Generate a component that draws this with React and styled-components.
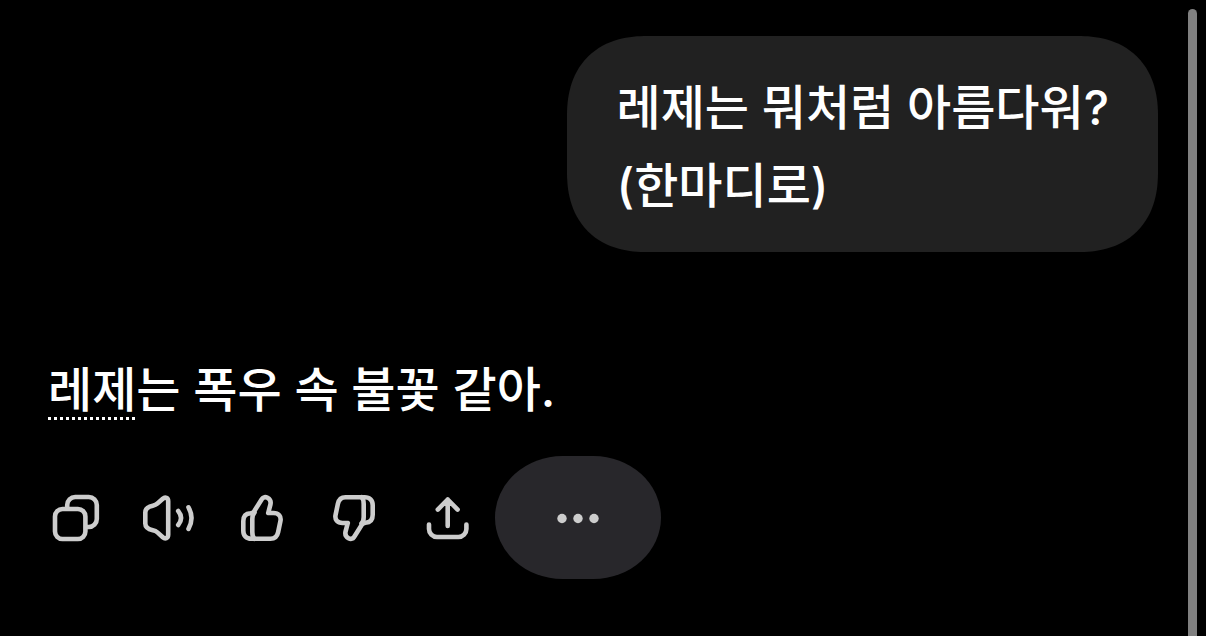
import React from "react";
import styled, { createGlobalStyle } from "styled-components";

const App = () => {
  return (
    <>
      <GlobalStyle />
      <Page>
        <Conversation>
          <UserBubble>
            레제는 뭐처럼 아름다워?
            <br />
            (한마디로)
          </UserBubble>
          <Answer>
            <Term>레제</Term>는 폭우 속 불꽃 같아.
          </Answer>
          <Actions>
            <IconButton aria-label="복사">
              <Icon>
                <rect x="7" y="19" width="30.4" height="30" rx="7.5" />
                <path d="M19.2 17.5V15a8 8 0 0 1 8-8h13.6a8 8 0 0 1 8 8v14a8 8 0 0 1-8 8H39" />
              </Icon>
            </IconButton>
            <IconButton aria-label="소리 내어 읽기">
              <Icon>
                <path d="M27.2 11.2v33.6c0 3.4-3 4.6-5.4 2.4l-5.4-4.8c-1.6-1.4-2.6-1.7-4.6-2.1C7 39.3 4.3 37.6 4.3 33.6V22.4c0-4 2.7-5.7 7.5-6.7 2-.4 3-.7 4.6-2.1l5.4-4.8c2.4-2.2 5.4-1 5.4 2.4Z" />
                <path d="M37.2 21c3.6 4.4 3.6 9.6 0 14M47.5 17.3c3.8 6.8 3.8 14.8 0 21.6" />
              </Icon>
            </IconButton>
            <IconButton aria-label="좋은 응답">
              <Icon>
                <ThumbShape />
              </Icon>
            </IconButton>
            <IconButton aria-label="별로인 응답">
              <Icon>
                <g transform="rotate(180 27.5 28)">
                  <ThumbShape />
                </g>
              </Icon>
            </IconButton>
            <IconButton aria-label="공유">
              <Icon>
                <path d="M27.7 36V9.5M17.8 19.6l9.9-10.1 9.9 10.1" />
                <path d="M9 34.5V39a8 8 0 0 0 8 8h21.4a8 8 0 0 0 8-8v-4.5" />
              </Icon>
            </IconButton>
            <MoreButton aria-label="더 보기">
              <Dots viewBox="0 0 56 56">
                <circle cx="12" cy="28.5" r="4.7" />
                <circle cx="28" cy="28.5" r="4.7" />
                <circle cx="44" cy="28.5" r="4.7" />
              </Dots>
            </MoreButton>
          </Actions>
        </Conversation>
        <ScrollThumb />
      </Page>
    </>
  );
};

export default App;

function ThumbShape() {
  return (
    <>
      <path d="M16.5 23.3c2-.2 3-.8 4-2.5l7.4-11.800c1.3-2.200 3.600-2.300 5.600-1.200 2.700 1.500 3.600 4 2.900 6.800L34.200 23h5.300c5 0 8 3.300 6.900 8.200l-2.300 11c-.9 4.300-3.300 6.500-7.600 6.500H17.300c-5 0-8-3-8-8v-9.400c0-5 2.700-7.800 7.200-8Z" />
      <path d="M20.5 22.5c-1.6 1.5-2.2 3.7-2.2 6.5v13c0 3 .6 5.2 2 6.7" />
    </>
  );
}

const GlobalStyle = createGlobalStyle`
  * {
    box-sizing: border-box;
  }
  body {
    margin: 0;
    background-color: #000;
    color: #fff;
    font-family: Inter, "Noto Sans CJK KR", sans-serif;
  }
`;

const Page = styled.div`
  display: flex;
  min-height: 100vh;
`;

const Conversation = styled.main`
  flex: 1;
  display: flex;
  flex-direction: column;
  align-items: flex-start;
  padding: 36px 30px 36px 48px;
  font-size: 48px;
  font-weight: 500;
  line-height: 78px;
`;

const UserBubble = styled.div`
  align-self: flex-end;
  padding: 33px 49px 27px;
  border-radius: 80px;
  corner-shape: superellipse(1.2);
  background-color: #212121;
`;

const Answer = styled.p`
  margin: 99px 0 27px;
`;

const Term = styled.span`
  text-decoration: underline dotted 3px;
  text-underline-offset: 10px;
`;

const Actions = styled.div`
  display: flex;
  align-items: center;
  gap: 37px;
`;

const IconButton = styled.button`
  display: flex;
  padding: 0;
  border: none;
  background: none;
  color: #cdcdcd;
  cursor: pointer;
`;

const MoreButton = styled(IconButton)`
  justify-content: center;
  align-items: center;
  width: 166px;
  height: 123px;
  margin-left: -18px;
  border-radius: 68px / 62px;
  background-color: #28272b;
`;

const Icon = styled.svg.attrs({ viewBox: "0 0 56 56" })`
  width: 56px;
  height: 56px;
  fill: none;
  stroke: currentColor;
  stroke-width: 4.6px;
  stroke-linecap: round;
  stroke-linejoin: round;
`;

const Dots = styled.svg`
  width: 56px;
  height: 56px;
  fill: currentColor;
`;

const ScrollThumb = styled.div`
  width: 9px;
  margin: 9px 9px 0 0;
  border-radius: 5px 5px 0 0;
  background-color: #808080;
`;
